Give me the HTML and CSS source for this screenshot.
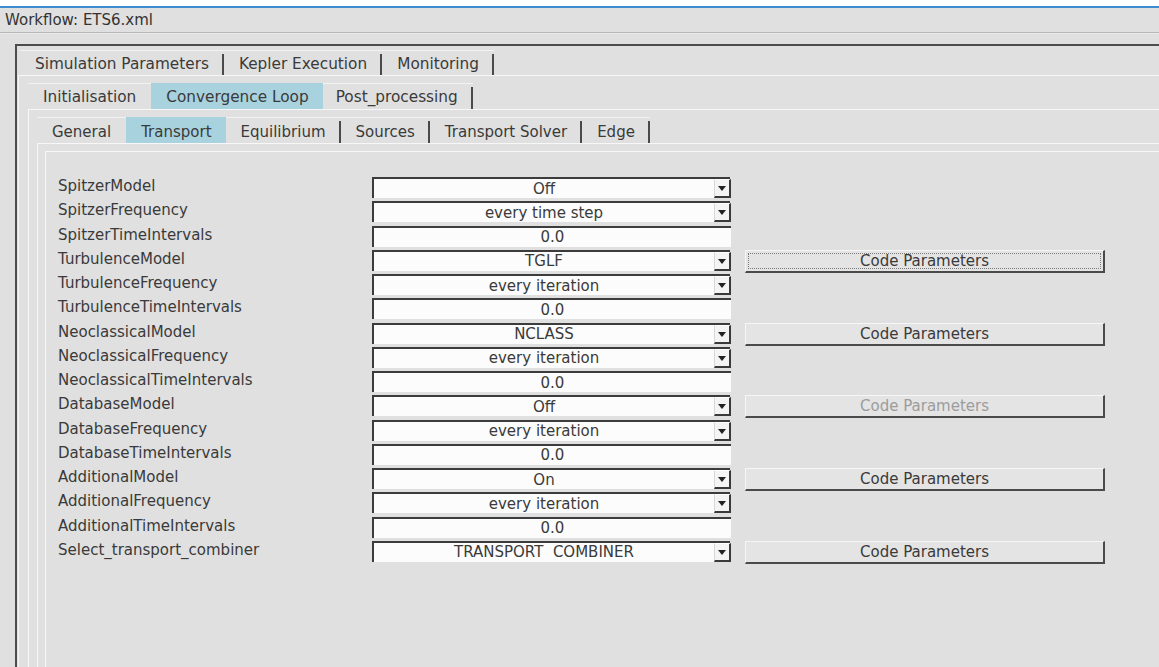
FILE: index.html
```html
<!DOCTYPE html>
<html lang="en">
<head>
<meta charset="utf-8">
<title>Workflow: ETS6.xml</title>
<link rel="stylesheet" href="styles.css">
</head>
<body>
  <div class="top-strip"></div>
  <div class="title-bar">Workflow: ETS6.xml</div>

  <div class="frame">
    <div class="tabbar tabbar-1">
      <div class="tab"><span class="tab-label">Simulation Parameters</span><span class="sep"></span></div>
      <div class="tab"><span class="tab-label">Kepler Execution</span><span class="sep"></span></div>
      <div class="tab"><span class="tab-label">Monitoring</span><span class="sep"></span></div>
    </div>
    <div class="pane pane-1">
      <div class="tabbar tabbar-2">
        <div class="tab before-active"><span class="tab-label">Initialisation</span></div>
        <div class="tab active"><span class="tab-label">Convergence Loop</span></div>
        <div class="tab after-active"><span class="tab-label">Post_processing</span><span class="sep"></span></div>
      </div>
      <div class="pane pane-2">
        <div class="tabbar tabbar-3">
          <div class="tab before-active"><span class="tab-label">General</span></div>
          <div class="tab active"><span class="tab-label">Transport</span></div>
          <div class="tab"><span class="tab-label">Equilibrium</span><span class="sep"></span></div>
          <div class="tab"><span class="tab-label">Sources</span><span class="sep"></span></div>
          <div class="tab"><span class="tab-label">Transport Solver</span><span class="sep"></span></div>
          <div class="tab"><span class="tab-label">Edge</span><span class="sep"></span></div>
        </div>
        <div class="pane pane-3">
          <div class="content">
            <div class="form">
              <div class="label">SpitzerModel</div>
              <div class="field combo"><span class="value">Off</span><span class="arrow"><i></i></span></div>
              <div class="cell"></div>

              <div class="label">SpitzerFrequency</div>
              <div class="field combo"><span class="value">every time step</span><span class="arrow"><i></i></span></div>
              <div class="cell"></div>

              <div class="label">SpitzerTimeIntervals</div>
              <div class="field entry"><span class="value">0.0</span></div>
              <div class="cell"></div>

              <div class="label">TurbulenceModel</div>
              <div class="field combo"><span class="value">TGLF</span><span class="arrow"><i></i></span></div>
              <div class="cell"><button class="btn focused"><span>Code Parameters</span></button></div>

              <div class="label">TurbulenceFrequency</div>
              <div class="field combo"><span class="value">every iteration</span><span class="arrow"><i></i></span></div>
              <div class="cell"></div>

              <div class="label">TurbulenceTimeIntervals</div>
              <div class="field entry"><span class="value">0.0</span></div>
              <div class="cell"></div>

              <div class="label">NeoclassicalModel</div>
              <div class="field combo"><span class="value">NCLASS</span><span class="arrow"><i></i></span></div>
              <div class="cell"><button class="btn"><span>Code Parameters</span></button></div>

              <div class="label">NeoclassicalFrequency</div>
              <div class="field combo"><span class="value">every iteration</span><span class="arrow"><i></i></span></div>
              <div class="cell"></div>

              <div class="label">NeoclassicalTimeIntervals</div>
              <div class="field entry"><span class="value">0.0</span></div>
              <div class="cell"></div>

              <div class="label">DatabaseModel</div>
              <div class="field combo"><span class="value">Off</span><span class="arrow"><i></i></span></div>
              <div class="cell"><button class="btn disabled"><span>Code Parameters</span></button></div>

              <div class="label">DatabaseFrequency</div>
              <div class="field combo"><span class="value">every iteration</span><span class="arrow"><i></i></span></div>
              <div class="cell"></div>

              <div class="label">DatabaseTimeIntervals</div>
              <div class="field entry"><span class="value">0.0</span></div>
              <div class="cell"></div>

              <div class="label">AdditionalModel</div>
              <div class="field combo"><span class="value">On</span><span class="arrow"><i></i></span></div>
              <div class="cell"><button class="btn"><span>Code Parameters</span></button></div>

              <div class="label">AdditionalFrequency</div>
              <div class="field combo"><span class="value">every iteration</span><span class="arrow"><i></i></span></div>
              <div class="cell"></div>

              <div class="label">AdditionalTimeIntervals</div>
              <div class="field entry"><span class="value">0.0</span></div>
              <div class="cell"></div>

              <div class="label">Select_transport_combiner</div>
              <div class="field combo"><span class="value">TRANSPORT&nbsp; COMBINER</span><span class="arrow"><i></i></span></div>
              <div class="cell"><button class="btn"><span>Code Parameters</span></button></div>
            </div>
          </div>
        </div>
      </div>
    </div>
  </div>
</body>
</html>
```

FILE: styles.css
```css
html, body {
  margin: 0;
  padding: 0;
  height: 100%;
  overflow: hidden;
}

body {
  background: #e0e0e0;
  color: #3a3a3a;
  font-family: "DejaVu Sans", "Liberation Sans", sans-serif;
  font-size: 15px;
  line-height: 1;
  display: flex;
  flex-direction: column;
}

/* window chrome */
.top-strip {
  flex: none;
  height: 6px;
  background: #ffffff;
  border-bottom: 2px solid #3f8bcf;
}

.title-bar {
  flex: none;
  height: 24px;
  padding-left: 5px;
  display: flex;
  align-items: center;
  border-bottom: 1px solid #b6b6b6;
  box-shadow: 0 1px 0 #ebebeb;
  color: #333;
}

.frame {
  flex: 1;
  min-height: 0;
  margin: 11px 0 0 15px;
  border-top: 2px solid #4c4c4c;
  border-left: 2px solid #4c4c4c;
  padding: 4px 0 0 1px;
  display: flex;
  flex-direction: column;
  overflow: hidden;
}

/* tab bars */
.tabbar {
  flex: none;
  display: flex;
  align-items: stretch;
}

.tabbar-1 {
  height: 25px;
  padding-left: 2px;
  font-size: 15.3px;
}

.tabbar-2 {
  height: 26px;
  font-size: 15.3px;
}

.tabbar-3 {
  height: 26px;
}

.tab {
  display: flex;
  align-items: stretch;
  border-top: 1px solid #f2f2f2;
}

.tab-label {
  display: flex;
  align-items: center;
  padding: 3px 13px 0 15px;
  white-space: nowrap;
}

.sep {
  width: 2px;
  margin-top: 3px;
  background: #4a4a4a;
}

.tab.before-active .tab-label {
  padding-right: 15px;
}

.tab.active {
  background: #a8d3de;
  border-top-color: #a8d3de;
  margin-bottom: -1px;
}

.tab.active .tab-label {
  padding: 2px 14px 0 15px;
}

.tab.after-active .tab-label {
  padding-left: 13px;
}

/* nested tab panes */
.pane {
  flex: 1;
  min-height: 0;
  display: flex;
  flex-direction: column;
  border-top: 1px solid #f7f7f7;
  border-left: 1px solid #f7f7f7;
}

.pane-1 {
  padding: 7px 0 0 9px;
}

.pane-2 {
  padding: 7px 0 0 8px;
}

.pane-3 {
  padding: 7px 0 0 7px;
}

.content {
  flex: 1;
  min-height: 0;
  border-top: 1px solid #f7f7f7;
  border-left: 1px solid #f7f7f7;
  padding: 25px 0 0 12px;
}

/* parameter form */
.form {
  display: grid;
  grid-template-columns: 314px 358px 375px;
  grid-auto-rows: 24.27px;
}

.label {
  display: flex;
  align-items: flex-start;
  padding-top: 2px;
  white-space: nowrap;
}

.field {
  height: 21px;
  box-sizing: border-box;
  background: #fcfcfc;
  border-top: 2px solid #3c3c3c;
  border-left: 2px solid #3c3c3c;
  display: flex;
  align-items: stretch;
}

.field .value {
  flex: 1;
  display: flex;
  align-items: center;
  justify-content: center;
  padding-top: 1px;
  white-space: nowrap;
}

.entry {
  margin-right: -1px;
}

.arrow {
  width: 17px;
  box-sizing: border-box;
  border-top: 1px solid #ffffff;
  border-left: 1px solid #d8d8d8;
  border-right: 2px solid #3a3a3a;
  border-bottom: 2px solid #3a3a3a;
  background: #f4f4f4;
  display: flex;
  align-items: center;
  justify-content: center;
  margin-right: -1px;
}

.arrow i {
  width: 0;
  height: 0;
  border-left: 4px solid transparent;
  border-right: 4px solid transparent;
  border-top: 5px solid #222;
  margin-top: 1px;
}

.cell {
  display: flex;
  align-items: flex-start;
}

.btn {
  margin-left: 15px;
  width: 361px;
  height: 23px;
  box-sizing: border-box;
  padding: 2px;
  background: #e4e4e4;
  border-top: 1px solid #f6f6f6;
  border-left: 1px solid #f6f6f6;
  border-right: 2px solid #4a4a4a;
  border-bottom: 2px solid #4a4a4a;
  font-family: inherit;
  font-size: 15px;
  color: #3a3a3a;
  display: flex;
  align-items: stretch;
}

.btn span {
  flex: 1;
  display: flex;
  align-items: center;
  justify-content: center;
  border: 1px solid transparent;
}

.btn.focused span {
  border: 1px dotted #7a7a7a;
}

.btn.disabled {
  color: #9c9c9c;
}
```
